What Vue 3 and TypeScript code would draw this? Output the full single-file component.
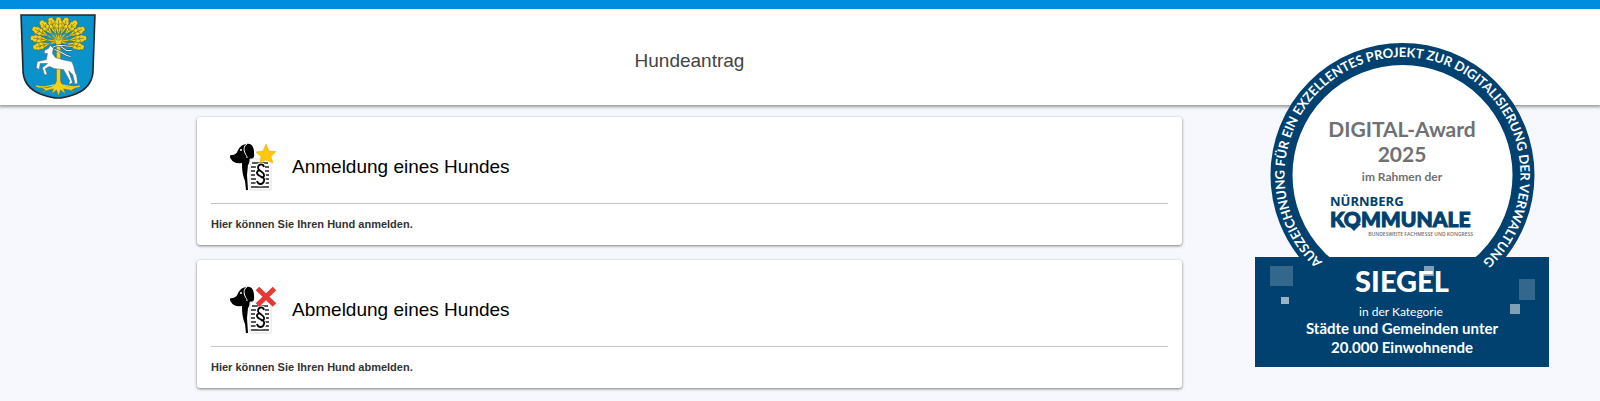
<script setup lang="ts">
interface Service {
  id: string
  title: string
  text: string
  mark: 'star' | 'cross'
}

const services: Service[] = [
  { id: 'anmeldung', title: 'Anmeldung eines Hundes', text: 'Hier können Sie Ihren Hund anmelden.', mark: 'star' },
  { id: 'abmeldung', title: 'Abmeldung eines Hundes', text: 'Hier können Sie Ihren Hund abmelden.', mark: 'cross' },
]

interface Leaf {
  angle: number
  reach: number
}

const leaves: Leaf[] = [
  { angle: -104, reach: 26 },
  { angle: 104, reach: 26 },
  { angle: -83, reach: 28 },
  { angle: 83, reach: 28 },
  { angle: -63, reach: 29 },
  { angle: 63, reach: 29 },
  { angle: -42, reach: 27 },
  { angle: 42, reach: 27 },
  { angle: -20, reach: 25 },
  { angle: 20, reach: 25 },
  { angle: 0, reach: 24 },
]
</script>

<template>
  <div class="page">
    <header class="top">
      <svg class="crest" viewBox="0 0 75 84" role="img" aria-label="Wappen">
        <path d="M1 1H74L72 58C71 68 65 75 55 79C49 81 44 83 37.500 83C31 83 26 81 20 79C10 75 4 68 3 58Z" fill="#0a92cb" stroke="#1d2730" stroke-width="1.600" />
        <g fill="#f2d21c" stroke="#4d5a2c" stroke-width=".5">
          <g v-for="leaf in leaves" :key="leaf.angle" :transform="`translate(38 27) rotate(${leaf.angle})`">
            <path d="M0 0V-12" stroke="#e0c01a" stroke-width="1.200" />
            <path :transform="`translate(0 ${-leaf.reach})`" d="M0 0C2 0 3 1 2.500 3C4 4 4 6 3 7C4.500 8 3.500 11 2.500 11C2.500 13 1 15 0 18C-1 15 -2.500 13 -2.500 11C-3.500 11 -4.500 8 -3 7C-4 6 -4 4 -2.500 3C-3 1 -2 0 0 0Z" />
            <path :transform="`translate(0 ${-leaf.reach})`" d="M0 3V15M-2 6L0 8L2 6M-2 10L0 12L2 10" fill="none" />
          </g>
        </g>
        <g fill="#f2d21c" stroke="#6d5c0c" stroke-width=".4">
          <path d="M30 23C35 24 36 29 36 34V66C35 71 31 72 26 73L20 72L25 75L20 78L28 75L33 74L31 79L36 75L38 81L40 75L45 79L43 74L49 75L56 78L51 75L57 72L49 72C43 71 41 70 40 66V34C40 29 41 24 46 23L38 26Z" />
          <path d="M16 71C23 74 27 71 34 70M59 71C52 74 48 71 42 70" fill="none" stroke="#f2d21c" stroke-width="1.200" />
        </g>
        <g fill="none" stroke="#26343d" stroke-width="1.800">
          <path d="M31 34C35 30 42 31 51 32M34 35C40 36 43 41 50 42M40 32L46 36L51 36" />
        </g>
        <g fill="none" stroke="#f2f5f7" stroke-width="1">
          <path d="M31 34C35 30 42 31 51 32M34 35C40 36 43 41 50 42M40 32L46 36L51 36" />
        </g>
        <path d="M24 36L28 34L30 31L33 34L32 39L35 43C41 45 46 46 51 47L52 49C54 53 54 58 56 61L57 69L53 69L54 68L52 60L48 56L52 68L48 70L49 66L43 55L34 54L29 52L25 54L27 60L24 60L22 53L27 49L20 49L19 55L16 53L17 47L26 45L27 39L24 39Z" fill="#fff" stroke="#50616b" stroke-width=".6" />
      </svg>
      <h1 class="title">Hundeantrag</h1>
    </header>

    <main class="services">
      <section v-for="service in services" :key="service.id" class="card">
        <a class="head" :href="`#${service.id}`">
          <svg class="icon" viewBox="0 0 48 48" aria-hidden="true">
            <path d="M0 13C0 12 1 12 3 12C6 11 7 10 8 7C10 3 13 1 17 1C22 0 24 5 24 9C24 12 25 14 22 16C19 17 20 20 18 22L17 32L18 47H16L15 38C13 33 12 29 12 20C8 21 3 20 1 16C0 15 0 14 0 13Z" fill="#000" />
            <path d="M17 1C13 3 14 8 15 10C16 13 17 12 17 15" fill="none" stroke="#fff" stroke-width="1" />
            <circle cx="11" cy="7" r="1" fill="#fff" />
            <path d="M20 16H41V47H20Z" fill="#fff" stroke="#e2dede" stroke-width="1" />
            <path d="M22 20H38M21 24H26M35 24H39M21 28H25M35 28H39M21 32H25M35 32H39M21 36H26M35 36H39M21 40H26M35 40H39M21 44H39" stroke="#222" stroke-width="1.400" />
            <path d="M34 23C32 20 27 22 28 25C29 28 35 29 34 33C33 35 30 35 29 34M30 27C26 29 27 32 30 34C33 35 35 37 34 39C33 42 28 42 27 39" fill="none" stroke="#fff" stroke-width="4" />
            <path d="M34 24C33 20 28 21 28 25C28 28 35 29 34 33C34 34 32 35 31 34M30 27C26 28 26 31 30 33C33 34 35 36 34 38C33 42 28 42 27 38" fill="none" stroke="#000" stroke-width="1.800" />
            <path v-if="service.mark === 'star'" d="M36 1L39 8L46 8.500L41 13.500L43 20L36 17L30 20L31 13.500L26 9L33 8Z" fill="#fdc80c" stroke="#efae0a" stroke-width=".6" stroke-linejoin="round" />
            <path v-else d="M27.500 2.500L44.500 19M44.500 2.500L27.500 19" stroke="#e53935" stroke-width="5" />
          </svg>
          <h2 class="name">{{ service.title }}</h2>
        </a>
        <p class="text">{{ service.text }}</p>
      </section>
    </main>

    <svg class="seal" viewBox="0 0 294 324" role="img" aria-label="DIGITAL-Award 2025 Siegel">
      <defs>
        <path id="seal-ring" d="M147.500 250A118 118 0 0 1 147.500 14A118 118 0 0 1 147.500 250" />
      </defs>
      <circle cx="147.500" cy="132" r="121" fill="#fff" stroke="#00416f" stroke-width="22" />
      <path d="M0 214H294V324H0Z" fill="#00416f" />
      <text class="ring"><textPath href="#seal-ring" startOffset="50%">AUSZEICHNUNG FÜR EIN EXZELLENTES PROJEKT ZUR DIGITALISIERUNG DER VERWALTUNG</textPath></text>
      <g fill="#6f7072">
        <text class="award" x="147" y="94">DIGITAL-Award</text>
        <text class="award" x="147" y="119">2025</text>
        <text class="frame" x="147" y="138">im Rahmen der</text>
      </g>
      <g fill="#00416f">
        <text class="city" x="75" y="163">NÜRNBERG</text>
        <text class="fair" x="75" y="184">KOMMUNALE</text>
        <path d="M92 181L99 188L106 181Z" />
      </g>
      <text class="note" x="218" y="193">BUNDESWEITE FACHMESSE UND KONGRESS</text>
      <g fill="#fff">
        <path d="M15 223H38V243H15ZM264 236H280V257H264Z" opacity=".2" />
        <path d="M26 254H34V261H26Z" opacity=".6" />
        <path d="M169 223H179V233H169ZM255 261H265V271H255Z" opacity=".5" />
        <text class="siegel" x="147" y="249">SIEGEL</text>
        <text class="category" x="146" y="273">in der Kategorie</text>
        <text class="group" x="147" y="291">Städte und Gemeinden unter</text>
        <text class="group" x="147" y="310">20.000 Einwohnende</text>
      </g>
    </svg>
  </div>
</template>

<style>
body {
  margin: 0;
  background: #f6f8fd;
}
</style>

<style scoped>
.page {
  position: relative;
  min-height: 100vh;
  box-sizing: border-box;
  padding-bottom: 12px;
  font-family: "Liberation Sans", Arial, sans-serif;
}
.top {
  display: flex;
  align-items: flex-start;
  box-sizing: border-box;
  height: 105px;
  padding: 5px 418px 0 20px;
  border-top: 9px solid #008de0;
  background: #fff;
  box-shadow: 0 1px 3px 1px #999;
}
.crest {
  flex: none;
  width: 76px;
  height: 85px;
}
.title {
  flex: 1;
  margin: 36px 0 0 101px;
  font-size: 19px;
  line-height: 22px;
  font-weight: 400;
  text-align: center;
  color: #444;
}
.services {
  display: flex;
  flex-direction: column;
  gap: 15px;
  margin: 12px 418px 0 197px;
}
.card {
  padding: 0 14px;
  border-radius: 3px;
  background: #fff;
  box-shadow: 0 1px 3px rgba(0, 0, 0, 0.5);
}
.head {
  display: flex;
  align-items: center;
  gap: 14px;
  padding: 26px 19px 12px;
  border-bottom: 1px solid #c4c4c4;
  color: #000;
  text-decoration: none;
}
.icon {
  width: 48px;
  height: 48px;
}
.name {
  margin: 0;
  font-size: 19px;
  line-height: 24px;
  font-weight: 400;
}
.text {
  margin: 0;
  font-size: 11px;
  line-height: 41px;
  font-weight: 700;
  color: #333;
}
.seal {
  position: absolute;
  top: 43px;
  right: 51px;
  width: 294px;
  height: 324px;
  font-family: Lato, sans-serif;
  text-anchor: middle;
}
.ring {
  font-size: 13px;
  font-weight: 700;
  fill: #fff;
}
.award {
  font-size: 21px;
  font-weight: 700;
}
.frame {
  font-size: 12px;
  font-weight: 700;
}
.city {
  font-family: "Open Sans", sans-serif;
  font-size: 13px;
  font-weight: 700;
  text-anchor: start;
}
.fair {
  font-size: 21px;
  font-weight: 900;
  text-anchor: start;
  stroke: #00416f;
  stroke-width: 1px;
}
.note {
  font-family: "Open Sans", sans-serif;
  font-size: 5px;
  font-weight: 600;
  text-anchor: end;
  fill: #6f7072;
}
.siegel {
  font-size: 29px;
  font-weight: 900;
}
.category {
  font-size: 12px;
}
.group {
  font-size: 15px;
  font-weight: 700;
}
</style>
